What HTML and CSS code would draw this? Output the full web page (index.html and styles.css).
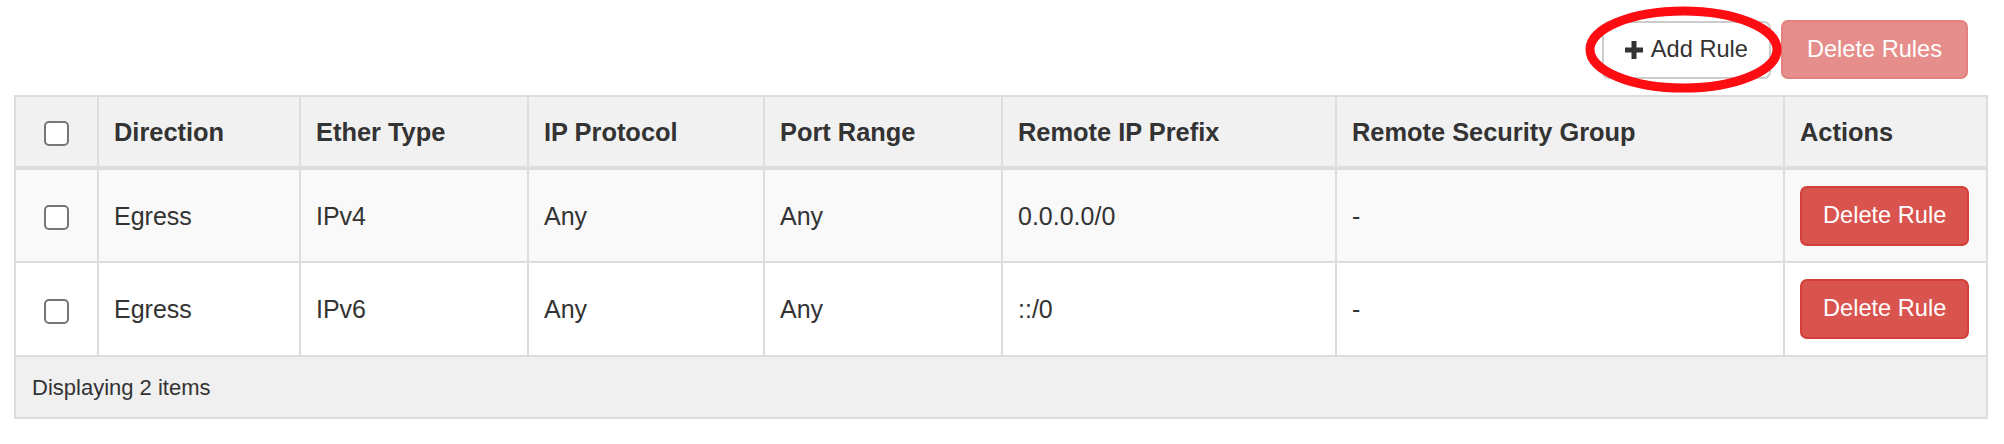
FILE: index.html
```html
<!DOCTYPE html>
<html>
<head>
<meta charset="utf-8">
<link rel="stylesheet" href="styles.css">
</head>
<body>
<div class="page">
  <div class="toolbar">
    <div class="marked">
      <button class="btn btn-default"><svg class="plus" viewBox="0 0 18 18" width="18" height="18"><rect x="6.5" y="0" width="5" height="18" fill="#333"/><rect x="0" y="6.5" width="18" height="5" fill="#333"/></svg>Add Rule</button>
      <svg class="circle" width="197" height="87" viewBox="0 0 197 87"><ellipse cx="98.5" cy="43.5" rx="93.5" ry="38.5" fill="none" stroke="#fd0c12" stroke-width="9"/></svg>
    </div>
    <button class="btn btn-danger disabled">Delete Rules</button>
  </div>
  <table class="rules">
    <colgroup>
      <col class="c-check"><col class="c-dir"><col class="c-ether"><col class="c-proto"><col class="c-port"><col class="c-prefix"><col class="c-group"><col class="c-actions">
    </colgroup>
    <thead>
      <tr>
        <th class="check"><input type="checkbox" class="cb"></th>
        <th>Direction</th>
        <th>Ether Type</th>
        <th>IP Protocol</th>
        <th>Port Range</th>
        <th>Remote IP Prefix</th>
        <th>Remote Security Group</th>
        <th>Actions</th>
      </tr>
    </thead>
    <tbody>
      <tr class="odd">
        <td class="check"><input type="checkbox" class="cb"></td>
        <td>Egress</td>
        <td>IPv4</td>
        <td>Any</td>
        <td>Any</td>
        <td>0.0.0.0/0</td>
        <td>-</td>
        <td><button class="btn btn-danger">Delete Rule</button></td>
      </tr>
      <tr>
        <td class="check"><input type="checkbox" class="cb"></td>
        <td>Egress</td>
        <td>IPv6</td>
        <td>Any</td>
        <td>Any</td>
        <td>::/0</td>
        <td>-</td>
        <td><button class="btn btn-danger">Delete Rule</button></td>
      </tr>
    </tbody>
    <tfoot>
      <tr>
        <td colspan="8" class="footer">Displaying 2 items</td>
      </tr>
    </tfoot>
  </table>
</div>
</body>
</html>
```
FILE: styles.css
```css
* { box-sizing: border-box; }
html, body { margin: 0; padding: 0; background: #fff; }
body {
  font-family: "Liberation Sans", Arial, Helvetica, sans-serif;
  color: #333;
}
.page {
  padding: 20px 0 0 14px;
  width: 1986px;
}
.toolbar {
  display: flex;
  justify-content: flex-end;
  align-items: center;
  gap: 10px;
  padding-right: 18px;
  margin-bottom: 16px;
}
.marked { position: relative; display: flex; }
.circle {
  position: absolute;
  left: -17px;
  top: -15px;
  z-index: 2;
  pointer-events: none;
}
.btn {
  font-family: "Liberation Sans", Arial, Helvetica, sans-serif;
  font-size: 23.6px;
  height: 60px;
  padding: 0 21px;
  border: 2px solid transparent;
  border-radius: 7px;
  display: inline-flex;
  align-items: center;
  cursor: pointer;
  line-height: 1;
}
.btn-default {
  background: #fff;
  border-color: #ccc;
  color: #333;
  height: 58px;
}
.plus { margin-right: 8px; }
.btn-danger {
  background: #d9534f;
  border-color: #d43f3a;
  color: #fff;
}
.btn-danger.disabled {
  opacity: 0.65;
  padding: 0 24px;
  height: 59px;
}
.rules {
  width: 1972px;
  table-layout: fixed;
  border-collapse: collapse;
  border: 2px solid #ddd;
}
.c-check { width: 83px; }
.c-dir { width: 202px; }
.c-ether { width: 228px; }
.c-proto { width: 236px; }
.c-port { width: 238px; }
.c-prefix { width: 334px; }
.c-group { width: 448px; }
.c-actions { width: 203px; }
.rules th, .rules td {
  border: 2px solid #ddd;
  padding: 14.4px 15px;
  text-align: left;
  vertical-align: middle;
  line-height: 36px;
}
.rules th {
  background: #f1f1f1;
  font-weight: bold;
  font-size: 25.4px;
  border-bottom-width: 4px;
  height: 72px;
}
.rules td {
  font-size: 25px;
  height: 94px;
}
.rules tbody tr.odd td { background: #f9f9f9; }
.rules .check { text-align: center; padding: 0; }
.cb {
  appearance: none;
  -webkit-appearance: none;
  width: 25px;
  height: 25px;
  margin: 0;
  border: 2px solid #767676;
  border-radius: 5px;
  background: #fff;
  vertical-align: middle;
  display: inline-block;
}
.rules td.footer {
  background: #f0f0f0;
  font-size: 22px;
  height: 62px;
  line-height: 31px;
  padding: 14px 16px;
}
```
